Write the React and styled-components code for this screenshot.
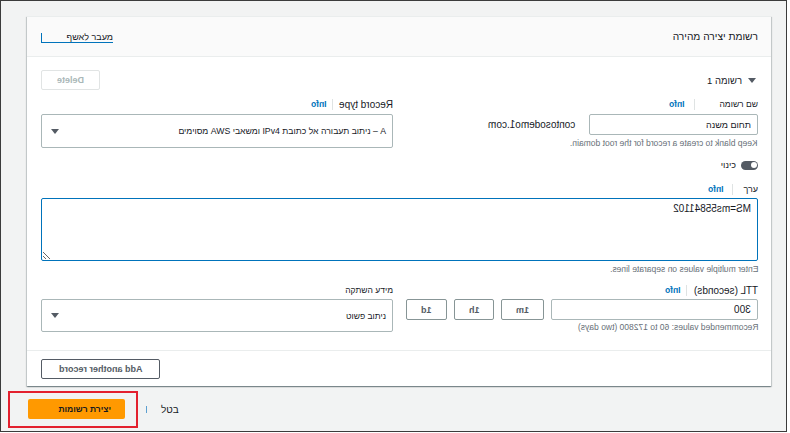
import React from "react";
import styled, { createGlobalStyle } from "styled-components";

const GlobalStyle = createGlobalStyle`
  html, body { margin: 0; padding: 0; background: #fff; }
  body {
    font-family: "Liberation Sans", Arial, "DejaVu Sans", sans-serif;
    color: #16191f;
  }
  * { box-sizing: border-box; }
`;

const Frame = styled.div`
  width: 787px;
  height: 432px;
  border: 1px solid #3b3b3b;
  background: #f2f3f3;
  padding: 15px 15px 0 26px;
  direction: rtl;
  font-size: 10px;
`;

const Card = styled.section`
  background: #fff;
  border-top: 1px solid #eaeded;
  box-shadow: 0 1px 1px 0 rgba(0, 28, 36, 0.3), 1px 1px 1px 0 rgba(0, 28, 36, 0.15),
    -1px 1px 1px 0 rgba(0, 28, 36, 0.15);
`;

const Header = styled.header`
  height: 40px;
  background: #fafafa;
  border-bottom: 1px solid #eaeded;
  display: flex;
  align-items: center;
  justify-content: space-between;
  padding: 0 13px 0 14px;
`;

const Title = styled.h2`
  margin: 0;
  font-size: 10.2px;
  font-weight: normal;
  color: #16191f;
`;

const WizardLink = styled.div`
  width: 72px;
  height: 10px;
  display: flex;
  align-items: center;
  font-size: 9px;
  line-height: 10px;
  color: #16191f;
  border-bottom: 1px solid #0073bb;
  border-left: 1px solid #0073bb;
  margin-top: 2px;
`;

const Body = styled.div`
  padding: 13px 13px 18px 14px;
`;

const Mirror = styled.span`
  display: inline-block;
  transform: scaleX(-1);
  direction: ltr;
  unicode-bidi: isolate;
  white-space: nowrap;
`;

const RecordHead = styled.div`
  display: flex;
  align-items: center;
  justify-content: space-between;
  height: 20px;
`;

const Expand = styled.div`
  display: flex;
  align-items: center;
  gap: 6px;
  font-size: 9.5px;
  color: #16191f;
  padding-right: 2px;
`;

const DeleteButton = styled.button`
  width: 59px;
  height: 20px;
  border: 1px solid #e1e4e4;
  border-radius: 2px;
  background: #fff;
  font-family: inherit;
  font-weight: bold;
  font-size: 9px;
  color: #aab7b8;
  display: flex;
  align-items: center;
  justify-content: center;
  padding: 0;
`;

const Columns = styled.div`
  display: grid;
  grid-template-columns: 1fr 1fr;
  column-gap: 13px;
  margin-top: ${(p) => p.$mt}px;
`;

const Col = styled.div`
  display: flex;
  flex-direction: column;
  min-width: 0;
`;

const LabelRow = styled.div`
  display: flex;
  align-items: center;
  height: 12px;
  margin-top: ${(p) => p.$mt || 0}px;
`;

const Label = styled.span`
  font-size: ${(p) => p.$size || 10}px;
  color: #16191f;
`;

const Sep = styled.span`
  width: 1px;
  height: 11px;
  background: #dfe3e3;
  margin-right: ${(p) => p.$before}px;
  margin-left: ${(p) => p.$after}px;
`;

const Info = styled(Mirror)`
  font-weight: bold;
  font-size: 8.5px;
  color: #0073bb;
`;

const Field = styled.div`
  height: 21px;
  width: ${(p) => (p.$w ? `${p.$w}px` : "auto")};
  flex: ${(p) => (p.$w ? "none" : "1")};
  margin-top: ${(p) => p.$mt || 0}px;
  border: 1px solid #aab7b8;
  border-radius: 2px;
  background: #fff;
  display: flex;
  align-items: center;
  justify-content: space-between;
  padding: 0 6px 0 9px;
  font-size: ${(p) => p.$size || 10}px;
  color: #16191f;
  white-space: nowrap;
`;

const NameRow = styled.div`
  display: flex;
  align-items: center;
  gap: 14px;
  margin-top: 4px;
`;

const Domain = styled(Mirror)`
  font-size: 10px;
  color: #16191f;
`;

const Hint = styled.div`
  margin-top: ${(p) => p.$mt || 3}px;
  font-size: 8.5px;
  line-height: 10px;
  color: #687078;
`;

const ToggleRow = styled.div`
  display: flex;
  align-items: center;
  gap: 5px;
  height: 10px;
  margin-top: 12px;
  font-size: 9px;
`;

const Pill = styled.span`
  width: 17px;
  height: 9px;
  border-radius: 5px;
  background: #545b64;
  display: flex;
  align-items: center;
  justify-content: flex-start;
  padding: 0 1.5px;
`;

const Knob = styled.span`
  width: 6px;
  height: 6px;
  border-radius: 50%;
  background: #fff;
`;

const ValueArea = styled.textarea`
  display: block;
  width: 100%;
  height: 63px;
  margin: 3px 0 0;
  border: 1px solid #0073bb;
  border-radius: 2px;
  transform: scaleX(-1);
  direction: ltr;
  resize: vertical;
  font-family: "Liberation Sans", Arial, sans-serif;
  font-size: 10px;
  line-height: 12px;
  padding: 4px 6px;
  color: #16191f;
  outline: none;
  background: #fff;
`;

const TtlRow = styled.div`
  display: flex;
  align-items: center;
  gap: 7px;
  margin-top: 3px;
`;

const TimeButton = styled.button`
  width: ${(p) => p.$w || 41}px;
  height: 21px;
  border: 1px solid #879596;
  border-radius: 2px;
  background: #fff;
  font-family: inherit;
  font-weight: bold;
  font-size: 9px;
  color: #545b64;
  display: flex;
  align-items: center;
  justify-content: center;
  padding: 0;
`;

const Divider = styled.hr`
  margin: 0;
  border: 0;
  border-top: 1px solid #eaeded;
`;

const CardFooter = styled.div`
  display: flex;
  justify-content: flex-end;
  padding: 8px 14px 7px;
`;

const AddButton = styled.button`
  width: 119px;
  height: 20px;
  border: 1px solid #545b64;
  border-radius: 2px;
  background: #fff;
  font-family: inherit;
  font-weight: bold;
  font-size: 9px;
  color: #545b64;
  display: flex;
  align-items: center;
  justify-content: center;
  padding: 0;
`;

const Actions = styled.div`
  display: flex;
  justify-content: flex-end;
  align-items: center;
  margin-top: 13px;
  padding-left: 1px;
`;

const Cancel = styled.span`
  font-size: 10px;
  color: #16191f;
`;

const Caret = styled.span`
  width: 1px;
  height: 7px;
  background: #5c9fd0;
  margin-right: 14px;
  margin-left: 21px;
`;

const Highlight = styled.div`
  position: relative;
  &::after {
    content: "";
    position: absolute;
    inset: -8px -13px -9px -20px;
    border: 2px solid #e3202e;
    pointer-events: none;
  }
`;

const CreateButton = styled.button`
  width: 97px;
  height: 20px;
  background: #ff9900;
  border: none;
  border-radius: 2px;
  font-family: inherit;
  font-weight: bold;
  font-size: 8.5px;
  color: #16191f;
  display: flex;
  align-items: center;
  justify-content: flex-start;
  padding: 0 14px 0 0;
`;

const DownArrow = () => (
  <svg width="8" height="5" viewBox="0 0 8 5">
    <path d="M0 0h8L4 5z" fill="#545b64" />
  </svg>
);

export default function App() {
  return (
    <>
      <GlobalStyle />
      <Frame dir="rtl">
        <Card>
          <Header>
            <Title>רשומת יצירה מהירה</Title>
            <WizardLink>מעבר לאשף</WizardLink>
          </Header>
          <Body>
            <RecordHead>
              <Expand>
                <DownArrow />
                <span>רשומה 1</span>
              </Expand>
              <DeleteButton>
                <Mirror>Delete</Mirror>
              </DeleteButton>
            </RecordHead>

            <Columns $mt={8}>
              <Col>
                <LabelRow>
                  <Label $size={8.5}>שם רשומה</Label>
                  <Sep $before={24} $after={10} />
                  <Info>Info</Info>
                </LabelRow>
                <NameRow>
                  <Field $w={169} $size={9}>תחום משנה</Field>
                  <Domain>contosodemo1.com</Domain>
                </NameRow>
                <Hint>
                  <Mirror>Keep blank to create a record for the root domain.</Mirror>
                </Hint>
              </Col>
              <Col>
                <LabelRow>
                  <Label>
                    <Mirror>Record type</Mirror>
                  </Label>
                  <Sep $before={6} $after={6} />
                  <Info>Info</Info>
                </LabelRow>
                <Field $mt={4} $size={8.7}>
                  <span>A – ניתוב תעבורה אל כתובת IPv4 ומשאבי AWS מסוימים</span>
                  <DownArrow />
                </Field>
              </Col>
            </Columns>

            <ToggleRow>
              <Pill>
                <Knob />
              </Pill>
              <span>כינוי</span>
            </ToggleRow>

            <LabelRow $mt={13}>
              <Label $size={9}>ערך</Label>
              <Sep $before={10} $after={9} />
              <Info>Info</Info>
            </LabelRow>
            <ValueArea readOnly defaultValue="MS=ms55841102" />
            <Hint>
              <Mirror>Enter multiple values on separate lines.</Mirror>
            </Hint>

            <Columns $mt={10}>
              <Col>
                <LabelRow>
                  <Label>
                    <Mirror>TTL (seconds)</Mirror>
                  </Label>
                  <Sep $before={7} $after={5} />
                  <Info>Info</Info>
                </LabelRow>
                <TtlRow>
                  <Field $w={207}>
                    <Mirror>300</Mirror>
                  </Field>
                  <TimeButton $w={43}>
                    <Mirror>1m</Mirror>
                  </TimeButton>
                  <TimeButton>
                    <Mirror>1h</Mirror>
                  </TimeButton>
                  <TimeButton>
                    <Mirror>1d</Mirror>
                  </TimeButton>
                </TtlRow>
                <Hint $mt={2}>
                  <Mirror>Recommended values: 60 to 172800 (two days)</Mirror>
                </Hint>
              </Col>
              <Col>
                <LabelRow>
                  <Label $size={8.5}>מידע השתקה</Label>
                </LabelRow>
                <Field $mt={3} $size={8.5}>
                  <span>ניתוב פשוט</span>
                  <DownArrow />
                </Field>
              </Col>
            </Columns>
          </Body>
          <Divider />
          <CardFooter>
            <AddButton>
              <Mirror>Add another record</Mirror>
            </AddButton>
          </CardFooter>
        </Card>

        <Actions>
          <Cancel>בטל</Cancel>
          <Caret />
          <Highlight>
            <CreateButton>יצירת רשומות</CreateButton>
          </Highlight>
        </Actions>
      </Frame>
    </>
  );
}
